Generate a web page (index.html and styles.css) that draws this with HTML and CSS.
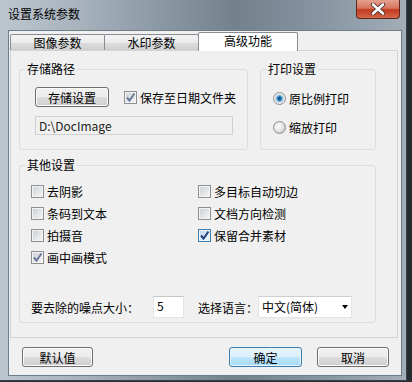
FILE: index.html
```html
<!DOCTYPE html>
<html lang="zh-CN">
<head>
    <meta charset="UTF-8">
    <title>设置系统参数</title>
    <link rel="stylesheet" href="styles.css">
</head>
<body>
    <div class="window">
        <div class="titlebar">
            <span class="title">设置系统参数</span>
            <div class="close">
                <svg width="16" height="12" viewBox="0 0 16 12">
                    <path d="M3 1.5 L13 10.5 M13 1.5 L3 10.5" stroke="#3a2a28" stroke-width="4.2" stroke-linecap="round"/>
                    <path d="M3 1.5 L13 10.5 M13 1.5 L3 10.5" stroke="#fff" stroke-width="2.6" stroke-linecap="round"/>
                </svg>
            </div>
        </div>

        <div class="client">
            <div class="tabs">
                <div class="tab">图像参数</div>
                <div class="tab">水印参数</div>
                <div class="tab active">高级功能</div>
            </div>

            <div class="panel">
                <div class="row-top">
                    <fieldset class="group storage">
                        <legend>存储路径</legend>
                        <div class="body">
                            <div class="line">
                                <button class="btn btn-store">存储设置</button>
                                <label class="check">
                                    <span class="cb on dim"><svg viewBox="0 0 11 11"><path d="M2 5.5 L4.5 8.5 L9.5 1.5"/></svg></span>
                                    保存至日期文件夹
                                </label>
                            </div>
                            <div class="path">D:\DocImage</div>
                        </div>
                    </fieldset>

                    <fieldset class="group print">
                        <legend>打印设置</legend>
                        <div class="body">
                            <label class="radio"><span class="rb on"></span>原比例打印</label>
                            <label class="radio"><span class="rb"></span>缩放打印</label>
                        </div>
                    </fieldset>
                </div>

                <fieldset class="group other">
                    <legend>其他设置</legend>
                    <div class="body">
                        <div class="checks">
                            <label class="check"><span class="cb"></span>去阴影</label>
                            <label class="check"><span class="cb"></span>多目标自动切边</label>
                            <label class="check"><span class="cb"></span>条码到文本</label>
                            <label class="check"><span class="cb"></span>文档方向检测</label>
                            <label class="check"><span class="cb"></span>拍摄音</label>
                            <label class="check"><span class="cb on hot"><svg viewBox="0 0 11 11"><path d="M2 5.5 L4.5 8.5 L9.5 1.5"/></svg></span>保留合并素材</label>
                            <label class="check"><span class="cb on dim"><svg viewBox="0 0 11 11"><path d="M2 5.5 L4.5 8.5 L9.5 1.5"/></svg></span>画中画模式</label>
                        </div>
                        <div class="noise">
                            <span class="lbl-noise">要去除的噪点大小：</span>
                            <div class="num">5</div>
                            <span class="lbl-lang">选择语言：</span>
                            <div class="select">
                                中文(简体)
                                <span class="arrow"></span>
                            </div>
                        </div>
                    </div>
                </fieldset>
            </div>

            <div class="actions">
                <button class="btn btn-default">默认值</button>
                <button class="btn btn-ok">确定</button>
                <button class="btn btn-cancel">取消</button>
            </div>
        </div>
    </div>
</body>
</html>
```

FILE: styles.css
```css
body{
    margin: 0;
    background: #262b30;
    font-family: "Noto Sans CJK SC", "Liberation Sans", sans-serif;
    font-size: 12px;
    color: #000;
}
.window{
    width: 407px;
    height: 381px;
    box-sizing: border-box;
    display: flex;
    flex-direction: column;
    background: linear-gradient(90deg, #bcc6cf 0%, #a9b4be 18%, #8a98a4 40%, #73818d 58%, #8594a0 78%, #a2aeb8 100%);
    border-right: 1px solid #39434c;
    border-bottom: 1px solid #39434c;
}
.titlebar{
    height: 30px;
    display: flex;
    align-items: flex-start;
    flex: none;
}
.title{
    padding: 6px 0 0 8px;
    line-height: 16px;
}
.close{
    margin-left: auto;
    margin-right: 6px;
    width: 44px;
    height: 19px;
    box-sizing: border-box;
    border: 1px solid #5e2a20;
    border-top: none;
    border-radius: 0 0 4px 4px;
    background: linear-gradient(#e4a08e 0%, #d6755e 45%, #c13a1e 55%, #d4664a 100%);
    display: flex;
    align-items: center;
    justify-content: center;
}
.client{
    flex: 1;
    margin: 0 4px 4px 8px;
    border: 1px solid #6f7d89;
    background: #f0f0f0;
    padding: 1px 3px 0 1px;
    display: flex;
    flex-direction: column;
}

/* tabs */
.tabs{
    display: flex;
    align-items: flex-end;
    height: 19px;
    margin-bottom: -1px;
    position: relative;
    z-index: 1;
}
.tab{
    width: 95px;
    height: 16px;
    box-sizing: border-box;
    margin-bottom: 1px;
    border: 1px solid #898c95;
    border-bottom: none;
    border-radius: 2px 2px 0 0;
    background: linear-gradient(#f3f3f3 0%, #ebebeb 50%, #dddddd 51%, #cfcfcf 100%);
    text-align: center;
    line-height: 15px;
}
.tab + .tab{
    margin-left: -1px;
}
.tab.active{
    width: 100px;
    height: 19px;
    margin-bottom: 0;
    background: #fff;
    line-height: 16px;
}
.panel{
    border: 1px solid #d4d4d4;
    padding: 10px 0 14px 8px;
}
.row-top{
    display: flex;
    gap: 12px;
}

/* group boxes */
.group{
    margin: 0;
    padding: 0;
    min-width: 0;
    box-sizing: border-box;
    border: 1px solid #d5dfe5;
    border-radius: 3px;
}
.group legend{
    margin-left: 5px;
    padding: 0 2px;
    line-height: 16px;
}
.storage{
    width: 229px;
    height: 89px;
}
.print{
    width: 116px;
    height: 89px;
}
.other{
    margin-top: 7px;
    width: 357px;
    height: 166px;
}
.storage .body{
    padding: 10px 0 0 15px;
}
.line{
    display: flex;
    align-items: center;
}
.path{
    margin-top: 9px;
    width: 198px;
    height: 19px;
    box-sizing: border-box;
    border: 1px solid #d0d0d0;
    padding-left: 3px;
    line-height: 17px;
    color: #222;
}
.print .body{
    padding: 11px 0 0 12px;
    display: flex;
    flex-direction: column;
    gap: 9px;
}
.other .body{
    padding: 7px 0 0 11px;
}
.checks{
    display: grid;
    grid-template-columns: 167px auto;
    grid-auto-rows: 22px;
}

/* checkbox / radio */
.check, .radio{
    display: flex;
    align-items: center;
    gap: 3px;
    height: 20px;
}
.checks .check{
    height: 22px;
}
.cb{
    width: 13px;
    height: 13px;
    box-sizing: border-box;
    border: 1px solid #8e8f8f;
    box-shadow: inset 0 0 0 1px #f4f4f4;
    background: linear-gradient(135deg, #cbcfd4, #f7f7f7);
    display: flex;
}
.cb svg{
    width: 11px;
    height: 11px;
}
.cb path{
    fill: none;
    stroke: #25407c;
    stroke-width: 2;
}
.cb.dim path{
    stroke: #6b7a99;
}
.cb.hot{
    border-color: #3c7fb1;
    background: linear-gradient(135deg, #b9d8ef, #eef7fd);
}
.rb{
    width: 13px;
    height: 13px;
    box-sizing: border-box;
    border-radius: 50%;
    border: 1px solid #8e8f8f;
    background: radial-gradient(circle at 40% 40%, #fafafa 0, #e2e2e2 5px, #cfcfcf 6px);
}
.rb.on{
    background: radial-gradient(circle at 50% 50%, #0d3f66 0, #2a7db8 2px, #86cbf1 3.3px, #d8d8d8 3.8px, #f6f6f6 6px);
}

/* noise / language row */
.noise{
    margin-top: 28px;
    display: flex;
    align-items: center;
    height: 22px;
}
.lbl-noise{
    width: 122px;
}
.num{
    width: 31px;
    height: 22px;
    box-sizing: border-box;
    border: 1px solid #e3e3e3;
    border-top-color: #c6c6c6;
    background: #fff;
    padding-left: 3px;
    line-height: 18px;
}
.lbl-lang{
    margin-left: 14px;
    width: 60px;
}
.select{
    width: 94px;
    height: 22px;
    box-sizing: border-box;
    border: 1px solid #e3e3e3;
    border-top-color: #cfcfcf;
    background: #fff;
    padding-left: 3px;
    line-height: 18px;
    display: flex;
    align-items: center;
}
.arrow{
    margin-left: auto;
    margin-right: 3px;
    width: 0;
    height: 0;
    border-left: 3.5px solid transparent;
    border-right: 3.5px solid transparent;
    border-top: 4px solid #000;
}

/* buttons */
.btn{
    font: inherit;
    color: #000;
    height: 20px;
    padding: 0;
    box-sizing: border-box;
    border: 1px solid #707070;
    border-radius: 3px;
    background: linear-gradient(#f2f2f2 0%, #ebebeb 50%, #dddddd 51%, #cfcfcf 100%);
    box-shadow: inset 0 0 0 1px #fbfbfb;
    line-height: 17px;
}
.btn-store{
    width: 74px;
    margin-right: 15px;
}
.actions{
    margin-top: 9px;
    padding: 0 9px 0 12px;
    display: flex;
}
.btn-default{
    width: 71px;
}
.btn-ok{
    width: 73px;
    margin-left: auto;
    border-color: #3c7fb1;
    background: linear-gradient(#eaf6fd 0%, #d9f0fc 50%, #bee6fd 51%, #a7d9f5 100%);
    box-shadow: inset 0 0 0 1px #e6f4fc;
}
.btn-cancel{
    width: 72px;
    margin-left: 15px;
}
```
